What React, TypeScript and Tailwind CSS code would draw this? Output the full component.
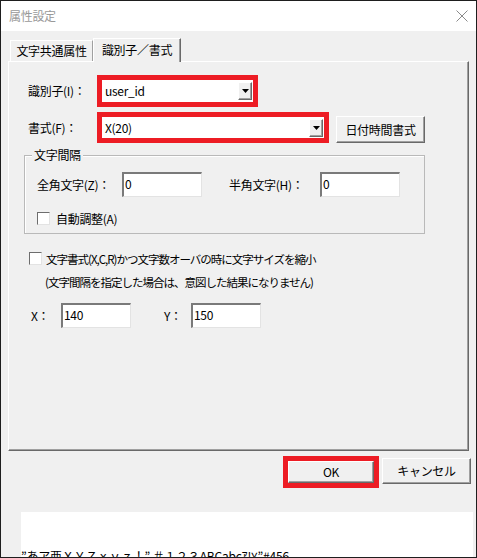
import React from "react";

const ui = "font-['Noto_Sans_CJK_JP',sans-serif] text-[12px] leading-[16px] text-black tracking-[-0.3px]";

function Raised({ className, children }: { className: string; children?: React.ReactNode }) {
  return (
    <div
      className={`flex items-center justify-center bg-[#f0f0f0] border border-t-white border-l-white border-r-[#696969] border-b-[#696969] shadow-[inset_-1px_-1px_0_#a0a0a0] ${className}`}
    >
      {children}
    </div>
  );
}

function Combo({ value }: { value: string }) {
  return (
    <div className="h-full border-[5px] border-[#ed1c24]">
      <div className="h-full bg-white flex items-center justify-between pl-[3px] pr-[1px]">
        <span>{value}</span>
        <Raised className="w-[14px] h-[18px]">
          <svg width="7" height="4" viewBox="0 0 7 4">
            <path d="M0 0H7L3.5 4Z" fill="#000" />
          </svg>
        </Raised>
      </div>
    </div>
  );
}

function Field({ value, className }: { value: string; className: string }) {
  return (
    <div
      className={`h-[25px] bg-white border-t-2 border-l-2 border-t-[#7a7a7a] border-l-[#7a7a7a] border-b border-r border-b-[#e3e3e3] border-r-[#e3e3e3] pl-[1px] pt-[2px] ${className}`}
    >
      {value}
    </div>
  );
}

function Check() {
  return (
    <div className="w-[13px] h-[13px] bg-white border border-t-[#6d6d6d] border-l-[#6d6d6d] border-b-[#e3e3e3] border-r-[#e3e3e3] shrink-0" />
  );
}

export default function App() {
  return (
    <div className={`w-[477px] h-[558px] border border-[#1e1e1e] bg-[#f0f0f0] flex flex-col overflow-hidden ${ui}`}>
      {/* title bar */}
      <div className="h-[30px] bg-white flex items-center justify-between pl-2 pr-2 shrink-0">
        <span className="text-[#999999]">属性設定</span>
        <svg width="12" height="12" viewBox="0 0 12 12">
          <path d="M0.5 0.5L11.5 11.5M11.5 0.5L0.5 11.5" stroke="#8a8a8a" strokeWidth="1" />
        </svg>
      </div>

      {/* tabs */}
      <div className="h-[30px] flex items-end pl-[9px] shrink-0">
        <div className="w-[83px] h-[21px] flex items-center justify-center border border-b-0 border-t-white border-l-white border-r-[#a0a0a0]">
          文字共通属性
        </div>
        <div className="relative z-10 -mb-px w-[88px] h-[24px] bg-[#f0f0f0] flex items-center justify-center pb-[2px] border border-b-0 border-t-white border-l-white border-r-[#696969] shadow-[inset_-1px_0_0_#a0a0a0]">
          識別子／書式
        </div>
      </div>

      {/* panel */}
      <div className="ml-[7px] w-[461px] h-[390px] shrink-0 flex flex-col border border-t-white border-l-white border-r-[#696969] border-b-[#696969] shadow-[inset_-1px_-1px_0_#a0a0a0]">
        <div className="mt-[13px] pl-[19px] flex items-center h-[32px]">
          <span className="w-[69px]">識別子(I)：</span>
          <div className="w-[161px] h-full">
            <Combo value="user_id" />
          </div>
        </div>

        <div className="mt-[5px] pl-[19px] flex items-center h-[31px]">
          <span className="w-[69px]">書式(F)：</span>
          <div className="w-[232px] h-full">
            <Combo value="X(20)" />
          </div>
          <Raised className="ml-[7px] w-[89px] h-[27px] self-end">日付時間書式</Raised>
        </div>

        <div className="relative mt-[12px] ml-[15px] w-[401px] h-[79px] shrink-0 border border-[#b9b9b9] shadow-[inset_1px_1px_0_#ffffff]">
          <span className="absolute left-[7px] -top-[9px] px-[2px] bg-[#f0f0f0]">文字間隔</span>
          <div className="mt-[16px] pl-[12px] flex items-center">
            <span className="w-[85px]">全角文字(Z)：</span>
            <Field value="0" className="w-[80px]" />
            <span className="ml-[27px] w-[91px]">半角文字(H)：</span>
            <Field value="0" className="w-[80px]" />
          </div>
          <div className="mt-[15px] pl-[12px] flex items-center h-[13px]">
            <Check />
            <span className="ml-[6px]">自動調整(A)</span>
          </div>
        </div>

        <div className="mt-[18px] pl-[20px] flex items-center h-[13px]">
          <Check />
          <span className="ml-[4px] text-[11.5px] tracking-[-1px]">文字書式(X,C,R)かつ文字数オーバの時に文字サイズを縮小</span>
        </div>
        <div className="mt-[9px] pl-[36px] text-[11.5px] tracking-[-1px]">(文字間隔を指定した場合は、意図した結果になりません)</div>

        <div className="mt-[13px] pl-[22px] flex items-center">
          <span className="w-[30px]">X：</span>
          <Field value="140" className="w-[70px]" />
          <span className="ml-[33px] w-[27px]">Y：</span>
          <Field value="150" className="w-[70px]" />
        </div>
      </div>

      {/* buttons */}
      <div className="mt-[5px] ml-[282px] flex items-start shrink-0">
        <div className="w-[96px] h-[32px] border-[5px] border-[#ed1c24]">
          <Raised className="w-full h-full">OK</Raised>
        </div>
        <Raised className="ml-[3px] mt-[2px] w-[89px] h-[26px]">キャンセル</Raised>
      </div>

      {/* preview */}
      <div className="mt-[24px] ml-[20px] w-[452px] flex-1 bg-white overflow-hidden">
        <div className="pt-[37px] whitespace-nowrap text-[12px] leading-[14px] font-['Noto_Sans_CJK_JP',monospace] tracking-[-0.2px]">
          ”あア亜ＸＹＺｘｙｚ！” ＃１２３ABCabcｱ!¥”#456
        </div>
      </div>
    </div>
  );
}
